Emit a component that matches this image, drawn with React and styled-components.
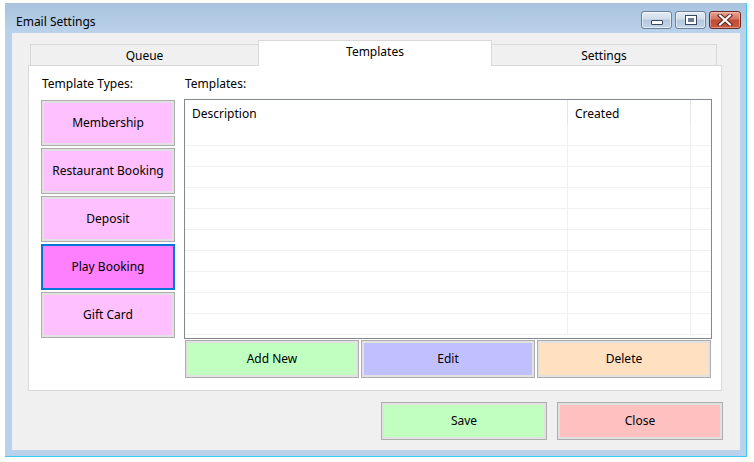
import React, { useState } from 'react';
import styled, { createGlobalStyle } from 'styled-components';

const GlobalStyle = createGlobalStyle`
  html, body {
    margin: 0;
    padding: 0;
    background: #ffffff;
    font-family: "Noto Sans", "Liberation Sans", Arial, sans-serif;
    font-size: 12px;
    color: #000;
  }
`;

const types = ['Membership', 'Restaurant Booking', 'Deposit', 'Play Booking', 'Gift Card'];
const tabs = ['Queue', 'Templates', 'Settings'];

export default function App() {
  const [selectedType, setSelectedType] = useState('Play Booking');
  const [tab, setTab] = useState('Templates');

  return <Page>
    <GlobalStyle />
    <Window>
      <TitleBar>
        <Title>Email Settings</Title>
        <Caption>
          <CapButton><MinGlyph /></CapButton>
          <CapButton><RestoreGlyph /></CapButton>
          <CloseButton>
            <svg width="16" height="12" viewBox="0 0 16 12">
              <path d="M3 1.5 L13 10.5 M13 1.5 L3 10.5" stroke="#5a1f18" strokeWidth="4.2" strokeLinecap="square" />
              <path d="M3 1.5 L13 10.5 M13 1.5 L3 10.5" stroke="#ffffff" strokeWidth="2.2" strokeLinecap="square" />
            </svg>
          </CloseButton>
        </Caption>
      </TitleBar>

      <Client>
        <TabStrip>
          {tabs.map(t => (
            <Tab key={t} $active={t === tab} $w={t === 'Queue' ? 229 : t === 'Templates' ? 234 : 226} onClick={() => setTab(t)}>{t}</Tab>
          ))}
        </TabStrip>
        <Panel>
          <TypesColumn>
            <Label>Template Types:</Label>
            {types.map(t => (
              <TypeButton key={t} $active={t === selectedType} onClick={() => setSelectedType(t)}>{t}</TypeButton>
            ))}
          </TypesColumn>
          <TemplatesColumn>
            <Label>Templates:</Label>
            <Grid>
              <HeaderRow>
                <HeadCell $w={383}>Description</HeadCell>
                <HeadCell $w={123}>Created</HeadCell>
                <HeadCell $w={20} />
              </HeaderRow>
              {Array.from({ length: 10 }).map((_, i) => (
                <Row key={i}>
                  <Cell $w={383} />
                  <Cell $w={123} />
                  <Cell $w={20} />
                </Row>
              ))}
            </Grid>
            <ActionRow>
              <ActionButton $bg="#c0ffc0">Add New</ActionButton>
              <ActionButton $bg="#c0c0ff">Edit</ActionButton>
              <ActionButton $bg="#ffe0c0">Delete</ActionButton>
            </ActionRow>
          </TemplatesColumn>
        </Panel>
        <Footer>
          <FooterButton $bg="#c0ffc0">Save</FooterButton>
          <FooterButton $bg="#ffc0c0">Close</FooterButton>
        </Footer>
      </Client>
    </Window>
  </Page>;
}

const Page = styled.div`
  width: 754px;
  height: 462px;
  padding: 3px 0 0 5px;
  box-sizing: border-box;
`;

const Window = styled.div`
  width: 742px;
  height: 454px;
  box-sizing: border-box;
  background: #b9d1ea;
  border-right: 1px solid #3ccbf0;
  border-bottom: 1px solid #3ccbf0;
  padding: 0 6px 6px 7px;
  display: flex;
  flex-direction: column;
`;

const TitleBar = styled.div`
  height: 30px;
  display: flex;
  align-items: center;
  justify-content: space-between;
  background: linear-gradient(#a9c3de, #bad2ea);
  margin: 0 -6px 0 -7px;
  padding: 0 5px 0 11px;
`;

const Title = styled.div`
  font-size: 12px;
  color: #000;
  padding-top: 6px;
`;

const Caption = styled.div`
  display: flex;
  gap: 3px;
  align-self: flex-start;
  margin-top: 8px;
`;

const CapButton = styled.div`
  width: 29px;
  height: 16px;
  border: 1px solid #6b7f99;
  border-radius: 3px;
  background: linear-gradient(#e4ecf5 0%, #cfdcea 45%, #b3c7dd 50%, #c3d5e8 100%);
  box-shadow: inset 0 0 0 1px rgba(255,255,255,0.55);
  display: flex;
  align-items: center;
  justify-content: center;
`;

const MinGlyph = styled.div`
  width: 10px;
  height: 3px;
  margin-top: 4px;
  background: #fff;
  border: 1px solid #38475a;
  border-radius: 1px;
`;

const RestoreGlyph = styled.div`
  width: 6px;
  height: 4px;
  border: 2px solid #fff;
  outline: 1px solid #38475a;
  background: #6a7d94;
`;

const CloseButton = styled(CapButton)`
  width: 30px;
  border-color: #6b2a22;
  background: linear-gradient(#e8a493 0%, #d4725e 45%, #c14a36 50%, #c85a44 100%);
  box-shadow: inset 0 0 0 1px rgba(255,220,210,0.45);
`;

const Client = styled.div`
  flex: 1;
  background: #f0f0f0;
  padding: 7px 0 0 16px;
  display: flex;
  flex-direction: column;
`;

const TabStrip = styled.div`
  display: flex;
  align-items: flex-end;
  height: 26px;
  padding-left: 2px;
  position: relative;
  z-index: 1;
`;

const Tab = styled.div`
  width: ${p => p.$w}px;
  height: ${p => (p.$active ? 26 : 22)}px;
  box-sizing: border-box;
  border: 1px solid #d9d9d9;
  border-bottom: ${p => (p.$active ? '1px solid #ffffff' : '1px solid #d9d9d9')};
  background: ${p => (p.$active ? '#ffffff' : '#f0f0f0')};
  margin-left: ${p => (p.$active ? -1 : 0)}px;
  margin-right: ${p => (p.$active ? -1 : 0)}px;
  display: flex;
  align-items: center;
  justify-content: center;
  padding-bottom: ${p => (p.$active ? 3 : 0)}px;
  font-size: 12px;
  cursor: default;
`;

const Panel = styled.div`
  width: 694px;
  height: 326px;
  box-sizing: border-box;
  margin-top: -1px;
  background: #ffffff;
  border: 1px solid #d9d9d9;
  padding: 10px 0 0 12px;
  display: flex;
  gap: 9px;
`;

const Label = styled.div`
  height: 22px;
  line-height: 16px;
  padding-left: 1px;
  font-size: 12px;
`;

const TypesColumn = styled.div`
  width: 134px;
  display: flex;
  flex-direction: column;
  gap: 2px;
`;

const TypeButton = styled.div`
  height: 46px;
  box-sizing: border-box;
  border: ${p => (p.$active ? '2px solid #0078d7' : '1px solid #adadad')};
  box-shadow: ${p => (p.$active ? 'none' : 'inset 0 0 0 2px #e1e1e1')};
  background: ${p => (p.$active ? '#ff80ff' : '#ffc0ff')};
  display: flex;
  align-items: center;
  justify-content: center;
  padding-bottom: 2px;
  font-size: 12px;
  cursor: default;
`;

const TemplatesColumn = styled.div`
  width: 528px;
  display: flex;
  flex-direction: column;
`;

const Grid = styled.div`
  height: 240px;
  box-sizing: border-box;
  border: 1px solid #828790;
  overflow: hidden;
  margin-top: 1px;
`;

const HeaderRow = styled.div`
  display: flex;
  height: 25px;
`;

const HeadCell = styled.div`
  width: ${p => p.$w}px;
  flex: none;
  box-sizing: border-box;
  border-right: 1px solid #e5e5e5;
  padding: 5px 0 0 7px;
  font-size: 12px;
  &:last-child { border-right: none; }
`;

const Row = styled.div`
  display: flex;
  height: 21px;
  box-sizing: border-box;
  border-bottom: 1px solid #f0f0f0;
`;

const Cell = styled.div`
  width: ${p => p.$w}px;
  flex: none;
  box-sizing: border-box;
  border-right: 1px solid #f0f0f0;
  &:last-child { border-right: none; }
`;

const ActionRow = styled.div`
  display: flex;
  gap: 2px;
  padding-left: 1px;
  margin-top: 1px;
`;

const ActionButton = styled.div`
  width: 174px;
  height: 38px;
  box-sizing: border-box;
  border: 1px solid #adadad;
  box-shadow: inset 0 0 0 2px #e1e1e1;
  background: ${p => p.$bg};
  display: flex;
  align-items: center;
  justify-content: center;
  padding-bottom: 2px;
  font-size: 12px;
  cursor: default;
`;

const Footer = styled.div`
  display: flex;
  justify-content: flex-end;
  gap: 10px;
  padding-right: 17px;
  margin-top: 11px;
`;

const FooterButton = styled(ActionButton)`
  width: 166px;
`;
